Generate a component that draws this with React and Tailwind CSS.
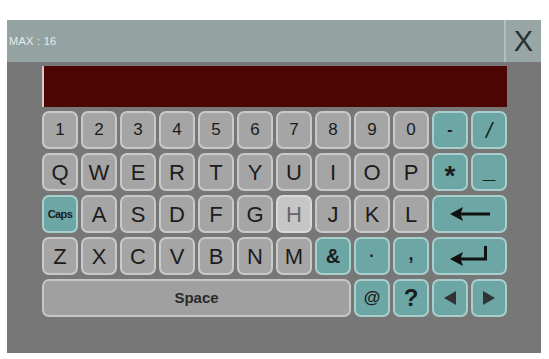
import React from 'react';

const gray = 'bg-[#a5a5a5] border-[#c9c9c9]';
const teal = 'bg-[#6ca7a5] border-[#a9cfcd]';

function Key({ children, tone = gray, span = '', extra = '' }) {
  return (
    <div
      className={`flex items-center justify-center rounded-[7px] border-2 text-[#1c1c1c] ${tone} ${span} ${extra}`}
    >
      {children}
    </div>
  );
}

function BackArrow() {
  return (
    <svg width="40" height="14" viewBox="0 0 40 14">
      <path d="M0 7 L13 0 L11 5.5 L40 5.5 L40 8.5 L11 8.5 L13 14 Z" fill="#111" />
    </svg>
  );
}

function EnterArrow() {
  return (
    <svg width="40" height="20" viewBox="0 0 40 20">
      <path d="M0 13 L13 6 L11 11.5 L34 11.5 L34 0 L37 0 L37 14.5 L11 14.5 L13 20 Z" fill="#111" />
    </svg>
  );
}

export default function App() {
  const digits = ['1', '2', '3', '4', '5', '6', '7', '8', '9', '0'];
  const row2 = ['Q', 'W', 'E', 'R', 'T', 'Y', 'U', 'I', 'O', 'P'];
  const row3 = ['A', 'S', 'D', 'F', 'G', 'H', 'J', 'K', 'L'];
  const row4 = ['Z', 'X', 'C', 'V', 'B', 'N', 'M'];

  return (
    <div className="w-[549px] h-[359px] bg-white pt-[20px] pl-[7px]" style={{ fontFamily: '"Liberation Sans", Arial, sans-serif' }}>
      <div className="w-[534px] h-[333px] bg-[#777777] flex flex-col">
        <div className="flex h-[42px]">
          <div className="flex-1 bg-[#95a2a2] flex items-center pl-[2px] text-[11px] text-[#e4ecec] tracking-wide">
            MAX : 16
          </div>
          <div className="w-[37px] bg-[#98a6a6] border-l-2 border-[#b3bfbf] flex items-center justify-center text-[29px] text-[#26302f] leading-none">
            X
          </div>
        </div>
        <div className="pl-[35px] pt-[4px]">
          <div className="w-[465px] h-[41px] bg-[#4b0604] border-l-2 border-[#d9c9c9]" />
          <div className="grid grid-cols-12 w-[465px] gap-x-[3px] gap-y-[4px] auto-rows-[38px] mt-[4px]">
            {digits.map(d => (
              <Key key={d} extra="text-[17px]">{d}</Key>
            ))}
            <Key tone={teal} extra="text-[16px] font-bold">-</Key>
            <Key tone={teal} extra="text-[22px] italic">/</Key>

            {row2.map(k => (
              <Key key={k} extra="text-[22px]">{k}</Key>
            ))}
            <Key tone={teal} extra="text-[28px] font-bold pt-[8px]">*</Key>
            <Key tone={teal} extra="text-[22px] font-bold pb-[4px]">_</Key>

            <Key tone={teal} extra="text-[11px] font-bold tracking-tighter text-[#0f2f30]">Caps</Key>
            {row3.map(k => (
              <Key
                key={k}
                tone={k === 'H' ? 'bg-[#c6c6c6] border-[#dadada]' : gray}
                extra={`text-[22px] ${k === 'H' ? 'text-[#666]' : ''}`}
              >
                {k}
              </Key>
            ))}
            <Key tone={teal} span="col-span-2"><BackArrow /></Key>

            {row4.map(k => (
              <Key key={k} extra="text-[22px]">{k}</Key>
            ))}
            <Key tone={teal} extra="text-[20px] font-bold text-[#0f2f30]">&amp;</Key>
            <Key tone={teal} extra="text-[16px] font-bold text-[#0f2f30]">·</Key>
            <Key tone={teal} extra="text-[18px] font-bold text-[#0f2f30] pb-[4px]">,</Key>
            <Key tone={teal} span="col-span-2"><EnterArrow /></Key>

            <Key span="col-span-8" tone="bg-[#a0a0a0] border-[#c6c6c6]" extra="text-[15px] font-bold text-[#2a2a2a]">Space</Key>
            <Key tone={teal} extra="text-[17px] font-bold text-[#0f2f30]">@</Key>
            <Key tone={teal} extra="text-[24px] font-bold text-[#0f2f30]">?</Key>
            <Key tone={teal}>
              <svg width="12" height="14" viewBox="0 0 12 14"><path d="M0 7 L12 0 L12 14 Z" fill="#333" /></svg>
            </Key>
            <Key tone={teal}>
              <svg width="12" height="14" viewBox="0 0 12 14"><path d="M12 7 L0 0 L0 14 Z" fill="#333" /></svg>
            </Key>
          </div>
        </div>
      </div>
    </div>
  );
}
